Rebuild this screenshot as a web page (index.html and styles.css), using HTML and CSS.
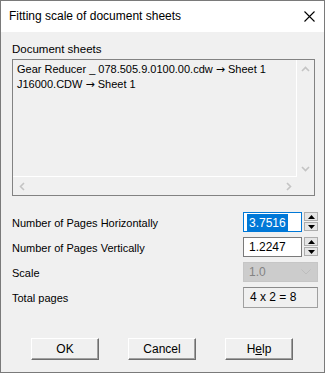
FILE: index.html
```html
<!DOCTYPE html>
<html lang="en">
<head>
    <meta charset="UTF-8">
    <title>Fitting scale of document sheets</title>
    <link rel="stylesheet" href="styles.css">
</head>
<body>
    <div class="dialog">
        <div class="titlebar">
            <span class="title">Fitting scale of document sheets</span>
            <svg class="close" width="11" height="11" viewBox="0 0 11 11">
                <path d="M0.5 0.5 L10.5 10.5 M10.5 0.5 L0.5 10.5" stroke="#000" stroke-width="1.1" fill="none"/>
            </svg>
        </div>
        <div class="content">
            <div class="group-label">Document sheets</div>
            <div class="listbox">
                <div class="list-items">
                    <div>Gear Reducer _ 078.505.9.0100.00.cdw <span class="arrow">→</span> Sheet 1</div>
                    <div>J16000.CDW <span class="arrow">→</span> Sheet 1</div>
                </div>
                <div class="vscroll">
                    <svg width="9" height="6" viewBox="0 0 9 6"><path d="M1 5 L4.5 1.5 L8 5" stroke="#c4c4c4" stroke-width="1.6" fill="none"/></svg>
                    <svg width="9" height="6" viewBox="0 0 9 6"><path d="M1 1 L4.5 4.5 L8 1" stroke="#c4c4c4" stroke-width="1.6" fill="none"/></svg>
                </div>
                <div class="hscroll">
                    <svg width="6" height="9" viewBox="0 0 6 9"><path d="M5 1 L1.5 4.5 L5 8" stroke="#c4c4c4" stroke-width="1.6" fill="none"/></svg>
                    <svg width="6" height="9" viewBox="0 0 6 9"><path d="M1 1 L4.5 4.5 L1 8" stroke="#c4c4c4" stroke-width="1.6" fill="none"/></svg>
                </div>
                <div class="corner"></div>
            </div>

            <div class="fields">
                <div class="row">
                    <span>Number of Pages Horizontally</span>
                    <div class="spin">
                        <div class="edit focused"><span class="sel">3.7516</span></div>
                        <div class="spin-btns">
                            <div class="spin-btn"><svg width="7" height="4" viewBox="0 0 7 4"><path d="M0 4 L3.5 0 L7 4 Z" fill="#000"/></svg></div>
                            <div class="spin-btn"><svg width="7" height="4" viewBox="0 0 7 4"><path d="M0 0 L3.5 4 L7 0 Z" fill="#000"/></svg></div>
                        </div>
                    </div>
                </div>
                <div class="row">
                    <span>Number of Pages Vertically</span>
                    <div class="spin">
                        <div class="edit">1.2247</div>
                        <div class="spin-btns">
                            <div class="spin-btn"><svg width="7" height="4" viewBox="0 0 7 4"><path d="M0 4 L3.5 0 L7 4 Z" fill="#000"/></svg></div>
                            <div class="spin-btn"><svg width="7" height="4" viewBox="0 0 7 4"><path d="M0 0 L3.5 4 L7 0 Z" fill="#000"/></svg></div>
                        </div>
                    </div>
                </div>
                <div class="row">
                    <span>Scale</span>
                    <div class="combo">
                        <span>1.0</span>
                        <svg width="10" height="6" viewBox="0 0 10 6"><path d="M0.5 0.5 L5 5 L9.5 0.5" stroke="#bdbdbd" stroke-width="1" fill="none"/></svg>
                    </div>
                </div>
                <div class="row">
                    <span>Total pages</span>
                    <div class="total">4 x 2 = 8</div>
                </div>
            </div>

            <div class="buttons">
                <button type="button">OK</button>
                <button type="button">Cancel</button>
                <button type="button">H<u>e</u>lp</button>
            </div>
        </div>
    </div>
</body>
</html>
```

FILE: styles.css
```css
* {
    margin: 0;
    padding: 0;
    box-sizing: border-box;
}

body {
    background-color: #ffffff;
    font-family: "Liberation Sans", Arial, sans-serif;
    font-size: 11px;
    color: #000;
}

.dialog {
    width: 325px;
    height: 373px;
    border: 1px solid #7a7a7a;
    background-color: #f0f0f0;
    display: flex;
    flex-direction: column;
}

.titlebar {
    height: 31px;
    background-color: #fff;
    display: flex;
    align-items: center;
    justify-content: space-between;
    padding: 0 9px 1px 8px;
    flex-shrink: 0;
}

.title {
    font-size: 12px;
}

.close {
    display: block;
}

.content {
    padding: 0 7px 0 11px;
}

.group-label {
    margin-top: 9px;
    height: 16px;
    line-height: 16px;
    font-size: 11.5px;
}

.listbox {
    margin-top: 2px;
    width: 303px;
    height: 137px;
    border: 1px solid #828282;
    display: grid;
    grid-template-columns: 1fr 17px;
    grid-template-rows: 1fr 18px;
}

.list-items {
    border-right: 1px solid #fff;
    border-bottom: 1px solid #fff;
    padding: 2px 4px 0 4px;
    line-height: 14px;
    font-size: 11px;
    white-space: nowrap;
    overflow: hidden;
}

.arrow {
    font-family: "DejaVu Sans", sans-serif;
    font-size: 11px;
}

.vscroll {
    display: flex;
    flex-direction: column;
    justify-content: space-between;
    align-items: center;
    padding: 6px 0 5px 0;
}

.hscroll {
    display: flex;
    justify-content: space-between;
    align-items: center;
    padding: 0 5px 0 6px;
}

.fields {
    margin-top: 16px;
    display: flex;
    flex-direction: column;
    gap: 5px;
    width: 306px;
    font-size: 11px;
}

.row {
    display: flex;
    justify-content: space-between;
    align-items: center;
    height: 20px;
}

.row span {
    padding-top: 1px;
}

.spin {
    display: flex;
    gap: 2px;
    width: 75px;
}

.edit {
    width: 59px;
    height: 20px;
    border: 1px solid #7a7a7a;
    background-color: #fff;
    padding: 0 0 0 5px;
    line-height: 18px;
    font-size: 12px;
}

.edit.focused {
    border-color: #0078d7;
    padding-left: 3px;
}

.sel {
    display: inline-block;
    background-color: #0078d7;
    color: #fff;
    padding: 0 2px;
    line-height: 16px;
    vertical-align: top;
    margin-top: 1px;
}

.spin-btns {
    display: flex;
    flex-direction: column;
    gap: 1px;
    width: 14px;
}

.spin-btn {
    height: 9px;
    border: 1px solid #adadad;
    background-color: #e5e5e5;
    display: flex;
    align-items: center;
    justify-content: center;
}

.spin-btn svg {
    display: block;
}

.combo {
    width: 75px;
    height: 20px;
    border: 1px solid #c6c6c6;
    background-color: #cccccc;
    color: #838383;
    display: flex;
    justify-content: space-between;
    align-items: center;
    padding: 0 6px 0 5px;
    font-size: 12px;
}

.row .combo span {
    padding-top: 0;
}

.total {
    width: 75px;
    height: 21px;
    border: 1px solid #a0a0a0;
    border-top-color: #8a8a8a;
    padding-left: 6px;
    line-height: 18px;
    font-size: 12px;
}

.buttons {
    margin-top: 31px;
    display: flex;
    gap: 29px;
    padding-left: 19px;
}

.buttons button {
    width: 68px;
    height: 22px;
    font-family: "Liberation Sans", Arial, sans-serif;
    font-size: 12px;
    color: #000;
    background-color: #f0f0f0;
    border: 1px solid;
    border-color: #fff #6e6e6e #6e6e6e #fff;
    box-shadow: inset -1px -1px 0 #a0a0a0;
}
```
